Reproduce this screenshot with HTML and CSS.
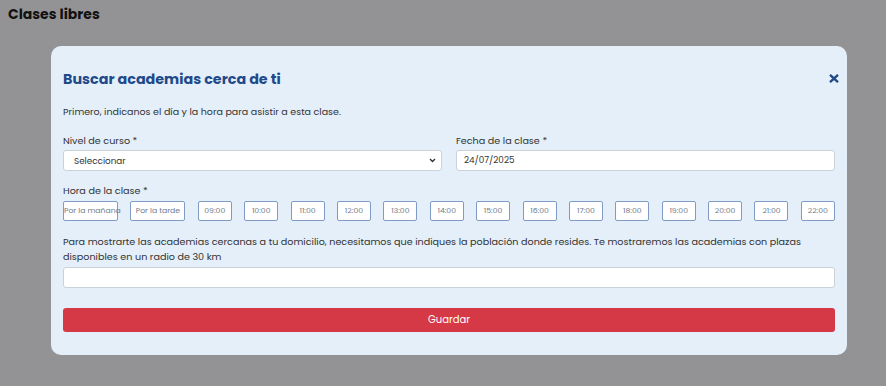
FILE: index.html
```html
<!DOCTYPE html>
<html lang="es">
<head>
    <meta charset="UTF-8">
    <meta name="viewport" content="width=device-width, initial-scale=1.0">
    <title>Clases libres</title>
    <link rel="stylesheet" href="styles.css">
</head>
<body>
    <h1 class="page-title">Clases libres</h1>

    <!-- Modal: buscar academias -->
    <div class="modal">
        <div class="modal-header">
            <h2>Buscar academias cerca de ti</h2>
            <button class="close-btn" aria-label="Cerrar">
                <svg width="10" height="9" viewBox="0 0 10 9">
                    <path d="M1 0.8 L9 8.2 M9 0.8 L1 8.2" stroke="#1f4a85" stroke-width="2.3" stroke-linecap="butt"/>
                </svg>
            </button>
        </div>

        <p class="intro">Primero, indicanos el día y la hora para asistir a esta clase.</p>

        <div class="form-row">
            <div class="field">
                <label for="nivel">Nivel de curso *</label>
                <div class="select-wrap">
                    <select id="nivel" class="control">
                        <option>Seleccionar</option>
                    </select>
                    <svg class="chevron" width="7" height="5" viewBox="0 0 7 5">
                        <path d="M1 1 L3.5 3.5 L6 1" fill="none" stroke="#333" stroke-width="1.4"/>
                    </svg>
                </div>
            </div>
            <div class="field">
                <label for="fecha">Fecha de la clase *</label>
                <input type="text" id="fecha" class="control date" value="24/07/2025">
            </div>
        </div>

        <div class="field hours-field">
            <label>Hora de la clase *</label>
            <div class="hours">
                <button class="hour wide">Por la mañana</button>
                <button class="hour wide">Por la tarde</button>
                <button class="hour">09:00</button>
                <button class="hour">10:00</button>
                <button class="hour">11:00</button>
                <button class="hour">12:00</button>
                <button class="hour">13:00</button>
                <button class="hour">14:00</button>
                <button class="hour">15:00</button>
                <button class="hour">16:00</button>
                <button class="hour">17:00</button>
                <button class="hour">18:00</button>
                <button class="hour">19:00</button>
                <button class="hour">20:00</button>
                <button class="hour">21:00</button>
                <button class="hour">22:00</button>
            </div>
        </div>

        <p class="location-text">Para mostrarte las academias cercanas a tu domicilio, necesitamos que indiques la población donde resides. Te mostraremos las academias con plazas disponibles en un radio de 30 km</p>
        <input type="text" class="control location-input">

        <button class="save-btn">Guardar</button>
    </div>
</body>
</html>
```

FILE: styles.css
```css
body {
    font-family: "Poppins", "Inter", "DejaVu Sans", sans-serif;
    background-color: #939395;
    color: #333;
    margin: 0;
    padding: 0;
}
.page-title {
    margin: 0;
    padding: 4px 8px 0;
    font-size: 14px;
    line-height: 20px;
    font-weight: 700;
    color: #111;
    height: 42px;
}
.modal {
    width: 796px;
    margin-left: 51px;
    box-sizing: border-box;
    padding: 19px 12px 23px;
    background: #e4effa;
    border-radius: 10px;
}
.modal-header {
    display: flex;
    justify-content: space-between;
    align-items: center;
    height: 28px;
}
.modal-header h2 {
    margin: 0;
    font-size: 14.3px;
    font-weight: 700;
    color: #1f4a8a;
}
.close-btn {
    background: none;
    border: none;
    padding: 0;
    margin-right: -4px;
    margin-top: -2px;
    display: flex;
    cursor: pointer;
}
.intro {
    margin: 11px 0 0;
    font-size: 9.5px;
    line-height: 16px;
}
.form-row {
    display: grid;
    grid-template-columns: 1fr 1fr;
    gap: 14px;
    margin-top: 13px;
}
.field label {
    display: block;
    font-size: 9.6px;
    line-height: 16px;
    margin-bottom: 1px;
    color: #333;
}
.control {
    display: block;
    width: 100%;
    box-sizing: border-box;
    height: 21px;
    padding: 0 9px;
    font-family: inherit;
    font-size: 8.8px;
    color: #333;
    background: #fff;
    border: 1px solid #cbd1d8;
    border-radius: 3px;
}
.select-wrap {
    position: relative;
}
select.control {
    appearance: none;
    padding: 0 20px 0 10px;
}
.chevron {
    position: absolute;
    right: 6px;
    top: 8px;
    pointer-events: none;
}
.control.date {
    padding-left: 7px;
}
.hours-field {
    margin-top: 12px;
}
.hours-field label {
    margin-bottom: 2px;
}
.hours {
    display: flex;
    justify-content: space-between;
}
.hour {
    width: 34px;
    height: 20px;
    padding: 0;
    font-family: inherit;
    font-size: 7.7px;
    color: #6f7a8a;
    background: #fff;
    border: 1px solid #7f9bc6;
    border-radius: 2px;
    white-space: nowrap;
    cursor: pointer;
}
.hour.wide {
    width: 55px;
}
.location-text {
    margin: 13px 0 0;
    font-size: 9.6px;
    line-height: 15px;
}
.location-input {
    margin-top: 3px;
}
.save-btn {
    display: block;
    width: 100%;
    height: 24px;
    margin-top: 20px;
    font-family: inherit;
    font-size: 10px;
    color: #fff;
    background: #d63946;
    border: none;
    border-radius: 3px;
    cursor: pointer;
}
```
